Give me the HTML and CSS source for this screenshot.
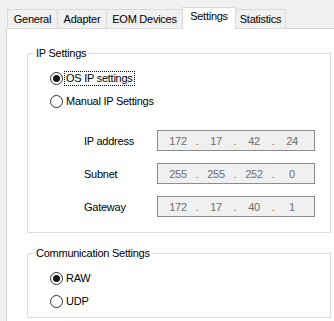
FILE: index.html
```html
<!DOCTYPE html>
<html>
<head>
<meta charset="utf-8">
<link rel="stylesheet" href="styles.css">
</head>
<body>
<div class="window">
  <div class="tabs">
    <div class="tab w-general">General</div>
    <div class="tab w-adapter">Adapter</div>
    <div class="tab w-eom">EOM Devices</div>
    <div class="tab tab-active w-settings">Settings</div>
    <div class="tab w-stats">Statistics</div>
  </div>
  <div class="page">
    <div class="group group-ip">
      <div class="legend">IP Settings</div>
      <div class="options">
        <div class="radio-row"><span class="radio checked"></span><span class="radio-label focused">OS IP settings</span></div>
        <div class="radio-row"><span class="radio"></span><span class="radio-label">Manual IP Settings</span></div>
      </div>
      <div class="fields">
        <div class="field">
          <span class="field-label">IP address</span>
          <div class="ipbox"><span class="seg">172</span><span class="dot">.</span><span class="seg">17</span><span class="dot">.</span><span class="seg">42</span><span class="dot">.</span><span class="seg">24</span></div>
        </div>
        <div class="field">
          <span class="field-label">Subnet</span>
          <div class="ipbox"><span class="seg">255</span><span class="dot">.</span><span class="seg">255</span><span class="dot">.</span><span class="seg">252</span><span class="dot">.</span><span class="seg">0</span></div>
        </div>
        <div class="field">
          <span class="field-label">Gateway</span>
          <div class="ipbox"><span class="seg">172</span><span class="dot">.</span><span class="seg">17</span><span class="dot">.</span><span class="seg">40</span><span class="dot">.</span><span class="seg">1</span></div>
        </div>
      </div>
    </div>
    <div class="group group-comm">
      <div class="legend">Communication Settings</div>
      <div class="options">
        <div class="radio-row"><span class="radio checked"></span><span class="radio-label">RAW</span></div>
        <div class="radio-row"><span class="radio"></span><span class="radio-label">UDP</span></div>
      </div>
    </div>
  </div>
</div>
</body>
</html>
```

FILE: styles.css
```css
html, body {
  margin: 0;
  padding: 0;
}
body {
  background: #f0f0f0;
  font-family: "Liberation Sans", Arial, sans-serif;
  font-size: 11px;
  letter-spacing: -0.25px;
  color: #000;
  width: 334px;
  height: 321px;
  overflow: hidden;
}
.window {
  padding-top: 7px;
}
.tabs {
  display: flex;
  align-items: flex-end;
  height: 21px;
  padding-left: 7px;
}
.tab {
  box-sizing: border-box;
  height: 19px;
  border: 1px solid #d9d9d9;
  border-bottom: none;
  background: #f0f0f0;
  text-align: center;
  line-height: 13px;
  padding-top: 3px;
  margin-left: -1px;
  white-space: nowrap;
}
.tab:first-child {
  margin-left: 0;
}
.tab-active {
  height: 22px;
  margin-bottom: -1px;
  background: #fff;
  padding-top: 2px;
  position: relative;
  z-index: 1;
}
.w-general { width: 51px; }
.w-adapter { width: 50px; }
.w-eom { width: 77px; }
.w-settings { width: 54px; }
.w-stats { width: 51px; }

.page {
  margin-left: 6px;
  width: 328px;
  height: 293px;
  border: 1px solid #d9d9d9;
  border-right: none;
  border-bottom: none;
  background: #fff;
  padding: 24px 0 0 20px;
  box-sizing: border-box;
}
.group {
  box-sizing: border-box;
  width: 304px;
  border: 1px solid #dcdcdc;
}
.group-ip {
  height: 180px;
}
.group-comm {
  height: 65px;
  margin-top: 20px;
}
.legend {
  width: fit-content;
  margin: -7px 0 0 6px;
  padding: 0 2px;
  background: #fff;
  line-height: 13px;
  white-space: nowrap;
}
.options {
  display: flex;
  flex-direction: column;
  padding: 7px 0 0 22px;
}
.radio-row {
  display: flex;
  align-items: center;
  height: 23px;
}
.radio {
  box-sizing: border-box;
  width: 13px;
  height: 13px;
  border: 1px solid #333;
  border-radius: 50%;
  background: #fff;
  display: flex;
  align-items: center;
  justify-content: center;
  flex: none;
}
.radio.checked::after {
  content: "";
  width: 7px;
  height: 7px;
  border-radius: 50%;
  background: #1a1a1a;
}
.radio-label {
  margin-left: 2px;
  padding: 0 1px;
  line-height: 13px;
}
.focused {
  outline: 1px dotted #000;
  outline-offset: 0;
}
.fields {
  display: flex;
  flex-direction: column;
  gap: 12px;
  margin-top: 17px;
  padding-left: 56px;
}
.field {
  display: flex;
  align-items: center;
  height: 21px;
}
.field-label {
  width: 73px;
  flex: none;
}
.ipbox {
  box-sizing: border-box;
  width: 158px;
  height: 21px;
  border: 1px solid #8c8c8c;
  background: #f0f0f0;
  color: #6d6d6d;
  display: flex;
  align-items: center;
  padding-left: 5px;
}
.seg {
  width: 30px;
  text-align: center;
}
.dot {
  width: 8px;
  text-align: center;
}
```
